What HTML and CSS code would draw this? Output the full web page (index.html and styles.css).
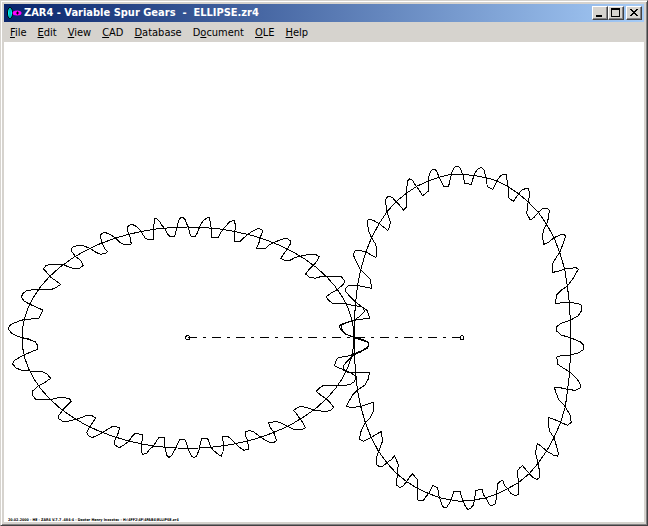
FILE: index.html
```html
<!DOCTYPE html>
<html lang="en">
<head>
<meta charset="utf-8">
<title>ZAR4 - Variable Spur Gears - ELLIPSE.zr4</title>
<link rel="stylesheet" href="styles.css">
</head>
<body>
<div class="window">
  <header class="titlebar">
    <svg class="app-icon" viewBox="0 0 16 16" aria-hidden="true">
      <ellipse cx="4" cy="8" rx="2.5" ry="5.5" fill="#0ff" stroke="#000"/>
      <path d="M4 4v8" stroke="#008080"/>
      <ellipse cx="11" cy="8" rx="4.5" ry="2.5" fill="#f0f"/>
      <path d="M10 8h3M11.500 6.500v3" stroke="#000"/>
    </svg>
    <h1 class="title">ZAR4 - Variable Spur Gears&nbsp; -&nbsp; ELLIPSE.zr4</h1>
    <div class="controls">
      <button class="control" aria-label="Minimize"><svg viewBox="0 0 12 10"><path d="M2 7h6v2H2z"/></svg></button>
      <button class="control" aria-label="Maximize"><svg viewBox="0 0 12 10"><path fill-rule="evenodd" d="M1 0h9v9H1zM2 2v6h7V2z"/></svg></button>
      <button class="control close" aria-label="Close"><svg viewBox="0 0 12 10"><path d="M2 1h2v1h1v1h2V2h1V1h2v1H9v1H8v1H7v1h1v1h1v1h1v1H8V7H7V6H5v1H4v1H2V7h1V6h1V5h1V4H4V3H3V2H2z"/></svg></button>
    </div>
  </header>
  <nav class="menubar">
    <button class="menu"><u>F</u>ile</button>
    <button class="menu"><u>E</u>dit</button>
    <button class="menu"><u>V</u>iew</button>
    <button class="menu"><u>C</u>AD</button>
    <button class="menu"><u>D</u>atabase</button>
    <button class="menu">D<u>o</u>cument</button>
    <button class="menu"><u>O</u>LE</button>
    <button class="menu"><u>H</u>elp</button>
  </nav>
  <main class="canvas">
    <svg class="drawing" viewBox="12 126 1920 1440" role="img" aria-label="Two meshing elliptical gears">
      <!-- left gear -->
      <ellipse class="line" cx="564" cy="1013" rx="498" ry="332"/>
      <g transform="translate(0 600)"><polyline class="line" points="92,418 68,414 48,407 33,398 25,386 28,377 42,369 58,363 74,358 115,356 122,346 128,330 108,321 90,313 72,303 64,290 70,279 82,271 112,268 150,270 168,263 182,253 166,241 151,231 140,217 130,206 138,197 152,193 188,194 222,206 240,204 250,196 243,182 226,169 216,156 213,147 219,141 233,136 252,138 270,145 288,157 302,163 317,160 323,155 313,144 305,128 301,106 306,101 314,97 330,103 347,114 362,129 372,133 394,132 390,112 385,100 382,85 385,77 397,73 410,80 422,93 436,115 444,118 461,118 461,90 463,57 468,55 478,63 486,76 494,86 502,102 509,108 524,108 530,85 536,62 542,53 548,52"/></g>
      <g transform="translate(540 600)"><polyline class="line" points="8,52 16,60 25,84 32,108 46,109 53,97 60,77 70,62 80,54 88,53 93,80 95,111 115,111 122,98 132,85 148,66 163,61 166,75 163,124 180,124 192,113 205,102 220,92 235,85 246,90 246,98 240,115 236,132 229,144 240,146 257,145 270,133 290,124 308,117 320,115 331,122 331,132 322,147 310,163 302,176 313,180 330,181 345,173 362,168 385,164 408,164 417,170 412,182 400,196 385,211 377,222 388,231 405,235 422,230 484,230 494,243 490,253 473,268 452,280 439,290 445,300 458,310 498,311 522,317 545,320 562,332 569,354 522,361 500,368 486,375 484,386 496,402 522,412"/></g>
      <g transform="translate(540 990)"><polyline class="line" points="522,22 550,29 566,38 564,50 545,62 520,72 500,80 475,82 468,92 463,107 480,115 500,122 528,138 524,154 510,164 472,168 430,166 420,173 409,184 422,195 440,208 452,220 461,232 455,239 441,244 422,243 402,240 378,232 362,229 350,235 341,241 350,252 358,264 370,280 376,293 365,299 355,300 340,297 322,288 305,280 290,275 266,277 268,289 279,303 286,320 290,332 282,337 270,337 255,330 240,320 222,306 210,302 196,305 196,315 203,332 206,357 192,361 180,353 165,340 150,324 143,319 128,319 130,345 129,365 124,379 112,371 100,361 92,350 85,330 80,325 66,325 61,340 57,360 50,378 43,382 36,380 24,357 18,335 14,328 0,328"/></g>
      <g transform="translate(0 990)"><polyline class="line" points="540,328 534,338 527,355 516,375 507,382 500,376 495,352 494,322 477,322 470,332 461,348 450,357 440,370 428,373 424,365 424,342 428,325 427,313 405,311 396,320 386,334 370,346 358,353 345,345 343,335 349,322 355,308 359,294 350,291 338,289 325,297 308,307 290,317 276,323 263,315 260,307 270,290 277,279 287,264 276,257 262,256 245,262 227,268 208,273 188,274 175,265 177,256 188,240 200,228 214,214 208,206 190,202 170,204 150,209 107,208 97,195 97,184 115,168 135,157 152,145 141,132 126,124 90,123 65,121 48,114 37,101 45,90 70,76 90,67 113,58 112,45 106,35 80,27 68,23"/></g>
      <!-- right gear -->
      <g transform="translate(1020 465)">
        <polyline class="line" points="43,548 43,495 47,440 53,390 62,345 77,292 95,247 118,205 141,170 168,140 199,115 232,93 265,78 297,67 333,58 360,58"/>
        <polyline class="line" points="43,548 20,538 2,525 -2,513 4,508 20,502 43,495 62,482 73,469 70,460 62,453 45,440 28,422 17,410 17,400 25,392 50,391 94,400 92,375 80,362 62,345 50,322 40,300 45,288 60,286 78,291 108,308 110,280 105,265 94,247 85,225 82,200 85,193 100,196 118,206 132,217 143,227 148,218 151,202 147,190 141,170 136,135 140,127 148,124 157,127 168,140 180,152 191,166 200,155 201,130 200,100 203,78 209,72 217,75 225,88 235,102 248,122 264,109 264,80 268,58 274,46 282,42 290,48 297,66 304,80 311,93 326,93 330,75 336,50 344,36 355,34 360,38"/>
      </g>
      <g transform="translate(1380 465)">
        <polyline class="line" points="0,58 40,61 78,68 110,77 145,95 175,116 205,141 235,172 260,208 282,248 299,292 314,342 322,393 328,442 331,496 331,540"/>
        <polyline class="line" points="303,540 290,528 290,515 305,504 331,496 355,482 364,468 364,450 355,446 328,442 286,445 290,420 305,405 322,393 338,372 355,343 348,338 315,342 295,349 278,352 278,325 290,305 299,292 310,265 317,242 308,237 282,248 265,262 251,268 247,240 253,220 260,208 265,190 268,165 260,159 246,162 235,172 222,187 211,195 200,175 204,145 209,120 206,102 198,100 185,106 175,118 160,139 150,132 144,124 144,95 139,59 128,58 119,65 110,79 98,103 82,95 78,68 72,45 64,37 52,43 42,60 34,88 14,85 9,60 0,38"/>
      </g>
      <g transform="translate(1380 1005)">
        <polyline class="line" points="331,0 331,60 329,111 323,163 316,215 302,262 282,308 260,348 234,385 208,416 175,443 143,461 110,477 75,489 42,495 0,499"/>
        <polyline class="line" points="0,469 6,490 14,510 23,523 32,520 40,510 44,493 47,466 66,463 71,480 80,493 88,508 93,513 105,508 110,485 112,448 120,440 128,436 133,450 143,461 152,475 165,482 175,478 175,440 172,408 180,398 188,392 196,402 208,416 220,428 231,433 238,428 238,405 234,385 227,355 229,335 233,326 245,335 260,348 280,360 292,363 296,357 290,335 282,308 270,290 266,275 266,248 280,252 302,262 323,271 334,262 330,240 316,215 295,192 287,170 283,157 300,158 322,163 345,166 360,160 362,150 350,130 329,111 308,98 294,88 290,66 300,63 331,60 355,54 370,44 370,30 360,20 331,8 303,0"/>
      </g>
      <g transform="translate(1020 1005)">
        <polyline class="line" points="360,499 335,495 298,488 267,476 232,460 200,440 170,416 141,384 115,348 93,306 76,263 62,214 52,163 47,112 43,60 43,8"/>
        <polyline class="line" points="43,8 85,22 84,38 60,52 40,60 20,80 11,92 12,106 24,112 88,112 86,130 75,150 55,163 38,180 26,200 19,214 35,218 62,214 80,208 101,202 99,230 90,250 76,263 64,285 58,313 70,319 93,308 110,297 125,289 127,320 118,345 110,365 109,388 118,395 128,394 141,383 155,373 163,362 175,388 172,410 170,451 181,458 190,452 200,440 210,424 218,416 232,434 234,495 250,496 258,485 267,474 278,451 293,459 298,487 305,508 312,519 320,518 327,506 335,490 341,470 360,469"/>
      </g>
      <!-- shaft centres and the line between them -->
      <path class="line axis" d="M564 1013H1386"/>
      <circle class="line" cx="563" cy="1013" r="6"/>
      <circle class="line" cx="1386" cy="1013" r="6"/>
      <text class="stamp" x="24" y="1562">20.02.2000 - HE - ZAR4 V.7.7 .484-4 - Dexter Henry Inxxxtec - H:\4FF2\4F\4FAB4\ELLIPSE.zr4</text>
    </svg>
  </main>
</div>
</body>
</html>
```
FILE: styles.css
```css
* { box-sizing: border-box; }

body {
  margin: 0;
  background: #d6d3ce;
  color: #000;
  font: 11px/14px "DejaVu Sans Condensed", "DejaVu Sans", sans-serif;
}

button {
  font: inherit;
  color: inherit;
  margin: 0;
}

.window {
  display: flex;
  flex-direction: column;
  min-height: 100vh;
  padding: 2px;
  border: 1px solid;
  border-color: #d6d3ce #424142 #424142 #d6d3ce;
  box-shadow: inset 1px 1px #fff, inset -1px -1px #848284;
}

.titlebar {
  display: flex;
  align-items: center;
  height: 18px;
  margin: 1px 1px 0;
  padding: 0 2px;
  background: linear-gradient(to right, #08246b, #a5cbf7);
}

.app-icon {
  width: 16px;
  height: 16px;
}

.title {
  flex: 1;
  margin: 0;
  padding-left: 2px;
  color: #fff;
  font: inherit;
  font-weight: bold;
  white-space: nowrap;
}

.controls { display: flex; }

.control {
  display: flex;
  width: 16px;
  height: 14px;
  padding: 1px;
  background: #d6d3ce;
  border: 1px solid;
  border-color: #fff #424142 #424142 #fff;
  box-shadow: inset -1px -1px #848284;
}

.control svg {
  width: 12px;
  height: 10px;
  shape-rendering: crispEdges;
}

.close { margin-left: 2px; }

.menubar {
  display: flex;
  height: 20px;
  padding: 2px 1px 0;
}

.menu {
  padding: 0 5px 0 6px;
  background: none;
  border: 0;
}

.canvas {
  flex: 1;
  margin: 0 1px 1px;
  background: #fff;
}

.drawing {
  display: block;
  width: 100%;
  height: auto;
}

.line {
  fill: none;
  stroke: #000;
  stroke-width: 3px;
  shape-rendering: crispEdges;
}

.axis { stroke-dasharray: 27 18 9 18; }

.stamp {
  font-size: 11px;
  font-weight: bold;
}
```
